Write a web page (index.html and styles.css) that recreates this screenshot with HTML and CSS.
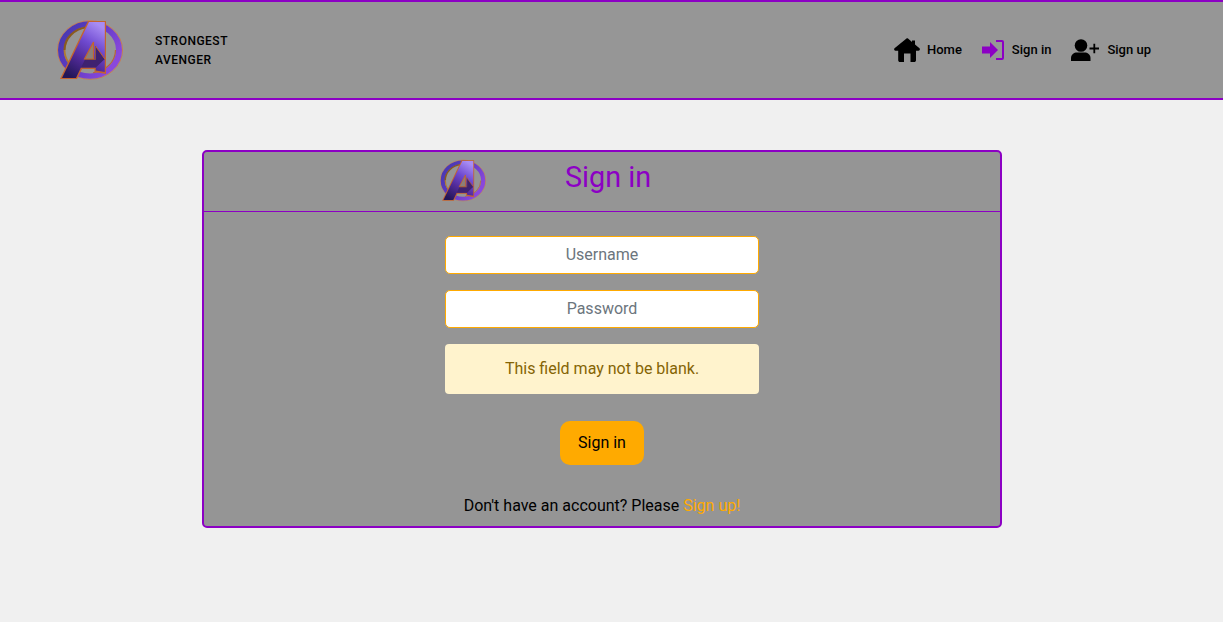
FILE: index.html
```html
<!DOCTYPE html>
<html lang="en">
<head>
<meta charset="utf-8">
<title>Strongest Avenger</title>
<link rel="stylesheet" href="styles.css">
</head>
<body>
<svg class="defs" width="0" height="0" aria-hidden="true">
  <defs>
    <linearGradient id="ringGrad" x1="0" y1="0" x2="1" y2="0.6">
      <stop offset="0" stop-color="#4438ac"/>
      <stop offset="0.5" stop-color="#5f3ac4"/>
      <stop offset="1" stop-color="#8a48dc"/>
    </linearGradient>
    <linearGradient id="aGrad" x1="0.75" y1="0" x2="0.25" y2="1">
      <stop offset="0" stop-color="#a88cf4"/>
      <stop offset="0.35" stop-color="#6f4ad0"/>
      <stop offset="0.65" stop-color="#512a98"/>
      <stop offset="1" stop-color="#231658"/>
    </linearGradient>
    <symbol id="avengers" viewBox="0 0 66 60">
      <g transform="translate(33 30) scale(1 .9)">
        <circle r="32.500" fill="none" stroke="#c9794f" stroke-width="1"/>
        <circle r="29" fill="none" stroke="url(#ringGrad)" stroke-width="6"/>
        <path d="M-25.500 0A25.500 25.500 0 0 1 -3 -25.300" fill="none" stroke="#8a5a1e" stroke-width="2.200"/>
        <path d="M-25.500 0A25.500 25.500 0 0 0 -11 23" fill="none" stroke="#b07a30" stroke-width="1.800"/>
        <path d="M25.500 0A25.500 25.500 0 0 1 3 25.300" fill="none" stroke="#b4643a" stroke-width="1.200"/>
      </g>
      <path d="M3 59L31 1H49V54L37.500 52V49H25L20 59Z" fill="#c4632e"/>
      <path d="M5 58L32 2H47.800V52L38.800 50.500V47.500H24L19 58Z" fill="url(#aGrad)"/>
      <path d="M36.500 22L27.500 39H36.500Z" fill="#8b8078" stroke="#c4632e" stroke-width="1.200"/>
      <path d="M38.500 26L47.800 39L38.800 47.500H24L28 39.500H38.500Z" fill="#3f2270"/>
      <path d="M38.500 26L47.800 39" fill="none" stroke="#c4632e" stroke-width="1"/>
      <path d="M38.500 26V39.500H28" fill="none" stroke="#9a5a30" stroke-width=".8"/>
    </symbol>
  </defs>
</svg>
<header class="topbar">
  <div class="brand">
    <svg class="brand-logo"><use href="#avengers"/></svg>
    <div class="brand-name">STRONGEST<br>AVENGER</div>
  </div>
  <nav class="nav">
    <a class="nav-link" href="#">
      <svg class="icon-home" viewBox="0 0 26 24"><path d="M12.500.5C13 .2 13.500.2 14 .5L18 3.900V2.500H21V6.400L25.500 10.300C26.300 11.200 25.800 12.700 24.500 12.700H22V22.200C22 23.200 21.200 24 20.200 24H16.500V15.500H10V24H6C5 24 4.200 23.200 4.200 22.200V12.700H1.500C.2 12.700-.3 11.200.5 10.300Z"/></svg>
      <span class="nav-text">Home</span>
    </a>
    <a class="nav-link" href="#">
      <svg class="icon-signin" viewBox="0 0 22 20"><path d="M0 6.500H8V2L16 10L8 18V13.500H0Z"/><path class="bracket" d="M14 1H20A1 1 0 0 1 21 2V18A1 1 0 0 1 20 19H14"/></svg>
      <span class="nav-text">Sign in</span>
    </a>
    <a class="nav-link" href="#">
      <svg class="icon-user" viewBox="0 0 28 22"><circle cx="10" cy="6.500" r="6.300"/><path d="M0 22V19C0 15.500 3 13.500 6 13.500H13.500C16.500 13.500 19.500 15.500 19.500 19V22Z"/><path class="plus" d="M18.500 9.500H28M23.300 4.800V14.200"/></svg>
      <span class="nav-text">Sign up</span>
    </a>
  </nav>
</header>
<main class="page">
  <section class="card">
    <div class="card-head">
      <svg class="card-logo"><use href="#avengers"/></svg>
      <h1 class="card-title">Sign in</h1>
    </div>
    <form class="card-body">
      <input class="field" type="text" placeholder="Username">
      <input class="field" type="password" placeholder="Password">
      <div class="alert">This field may not be blank.</div>
      <button class="submit" type="button">Sign in</button>
      <p class="switch">Don't have an account? Please <a href="#">Sign up!</a></p>
    </form>
  </section>
</main>
</body>
</html>
```

FILE: styles.css
```css
* {
  box-sizing: border-box;
}

html,
body {
  margin: 0;
  height: 100%;
}

body {
  background: #f0f0f0;
  color: #000;
  font-family: Roboto, "Liberation Sans", sans-serif;
  font-size: 16px;
  overflow: hidden;
}

a {
  text-decoration: none;
}

.defs {
  display: block;
  height: 0;
}

.topbar {
  display: flex;
  align-items: center;
  justify-content: space-between;
  height: 100px;
  padding: 0 72px 0 57px;
  background: #969696;
  border-top: 2px solid #8c00c4;
  border-bottom: 2px solid #8c00c4;
}

.brand {
  display: flex;
  align-items: center;
  gap: 32px;
}

.brand-logo {
  display: block;
  width: 66px;
  height: 60px;
}

.brand-name {
  padding-top: 2px;
  font-size: 12px;
  font-weight: 500;
  line-height: 19px;
  letter-spacing: 0.5px;
}

.nav {
  display: flex;
  align-items: center;
  gap: 20px;
}

.nav-link {
  display: flex;
  align-items: center;
  gap: 7px;
  color: #000;
  font-size: 13px;
  font-weight: 500;
}

.nav-text {
  padding-bottom: 2px;
}

.icon-home {
  display: block;
  width: 26px;
  height: 24px;
  fill: #000;
}

.icon-signin {
  display: block;
  width: 22px;
  height: 20px;
  fill: #8c00c4;
  margin-right: 1px;
}

.bracket {
  fill: none;
  stroke: #8c00c4;
  stroke-width: 2;
}

.icon-user {
  display: block;
  width: 28px;
  height: 22px;
  fill: #000;
  margin-right: 1px;
}

.plus {
  fill: none;
  stroke: #000;
  stroke-width: 1.800;
}

.page {
  display: flex;
  justify-content: center;
  padding: 50px 20px 0 0;
}

.card {
  width: 800px;
  height: 378px;
  background: #959595;
  border: 2px solid #8c00c4;
  border-radius: 5px;
}

.card-head {
  display: flex;
  align-items: center;
  gap: 79px;
  height: 60px;
  padding-left: 236px;
  border-bottom: 1px solid #8c00c4;
}

.card-logo {
  display: block;
  width: 46px;
  height: 43px;
  margin-bottom: 3px;
}

.card-title {
  margin: 0 0 9px;
  padding-left: 0.5px;
  color: #8c00c4;
  font-size: 28.800px;
  font-weight: 400;
  line-height: 36px;
}

.card-body {
  display: flex;
  flex-direction: column;
  align-items: center;
  padding-top: 24px;
  text-indent: 1px;
}

.field {
  display: block;
  width: 314px;
  height: 38px;
  margin-bottom: 16px;
  padding: 0 0 2px;
  background: #fff;
  border: 1px solid #ffaa00;
  border-radius: 5px;
  font: inherit;
  text-align: center;
  text-indent: 1px;
  color: #495057;
}

.field::placeholder {
  color: #6c757d;
  opacity: 1;
}

.alert {
  width: 314px;
  height: 50px;
  margin-bottom: 27px;
  background: #fff3cd;
  border-radius: 4px;
  color: #856404;
  line-height: 49px;
  text-align: center;
}

.submit {
  display: block;
  width: 84px;
  height: 44px;
  margin-bottom: 29px;
  padding: 0 0 2px;
  background: #ffaa00;
  border: 0;
  border-radius: 10px;
  color: #000;
  font: inherit;
  text-indent: 1px;
}

.switch {
  margin: 0;
  line-height: 24px;
}

.switch a {
  color: #ffaa00;
}
```
